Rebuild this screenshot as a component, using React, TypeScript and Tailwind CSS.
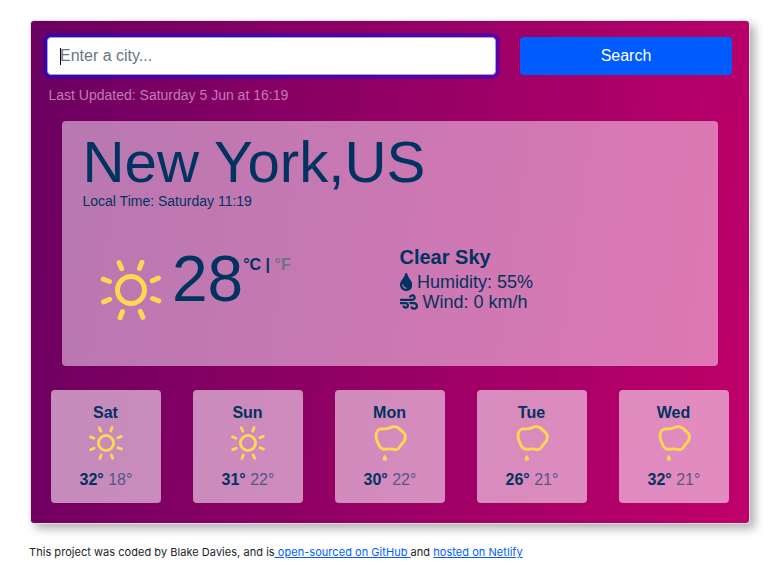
import React from "react";

const rays = [-23.5, 21.5, 66.5, 111.5, 156.5, 201.5, 246.5, 291.5];

function Sun({ className }: { className: string }) {
  return (
    <svg viewBox="-34 -34 68 68" className={className} fill="none" stroke="#ffd750" strokeWidth="5" strokeLinecap="round">
      <circle r="13.5" />
      {rays.map((a) => (
        <line key={a} x1="0" y1="-23.2" x2="0" y2="-29.8" transform={`rotate(${a})`} />
      ))}
    </svg>
  );
}

function RainCloud({ className }: { className: string }) {
  return (
    <svg viewBox="0 0 114 114" className={className} fill="none">
      <path
        d="M51 27C39 25 33 37 33 48C33 60 38 67 43 78C48 90 60 88 71 87C79 84 83 91 94 89C104 87 104 78 111 71C118 66 121 58 121 49C121 40 115 37 109 32C101 20 86 17 75 23C66 28 61 26 51 27Z"
        transform="translate(-18 -12)"
        stroke="#ffd750"
        strokeWidth="8.5"
        strokeLinejoin="round"
      />
      <path d="M41 91C39 98 35 100 35 105C35 112 48 112 48 105C48 100 43 98 41 91Z" fill="#ffd750" />
    </svg>
  );
}

const days = [
  { day: "Sat", max: 32, min: 18, rain: false },
  { day: "Sun", max: 31, min: 22, rain: false },
  { day: "Mon", max: 30, min: 22, rain: true },
  { day: "Tue", max: 26, min: 21, rain: true },
  { day: "Wed", max: 32, min: 21, rain: true },
];

export default function App() {
  return (
    <div className="h-[583px] w-[782px] overflow-hidden bg-white pl-[30px] pt-5 font-['Liberation_Sans',Arial,sans-serif] text-[#003360]">
      <main className="h-[504px] w-[720px] rounded border border-black/12 bg-[linear-gradient(98deg,#6a0060_0%,#c0006a_100%)] bg-clip-padding px-4 pt-4 shadow-[5px_5px_10px_rgba(0,0,0,0.3)]">
        <form className="flex h-[38px] gap-6">
          <div className="flex w-[449px] items-center rounded border border-[#80adff] bg-white pl-3 text-base text-[#6c757d] shadow-[0_0_0_4px_rgba(40,0,210,0.5)]">
            <span className="h-[17px] w-px bg-black" />
            <span className="-ml-px">Enter a city...</span>
          </div>
          <button type="button" className="w-[212px] rounded bg-[#005cff] text-center text-base text-white">
            Search
          </button>
        </form>
        <p className="mt-2.5 pl-[1.5px] text-sm leading-5 text-[#c47ab4]">Last Updated: Saturday 5 Jun at 16:19</p>

        <section className="ml-[15px] mt-4 h-[245px] w-[656px] rounded bg-[rgba(255,236,253,0.51)] pl-[20.5px] pt-[9px]">
          <h1 className="h-[63px] whitespace-nowrap text-[58.2px] leading-[64px]">New York,US</h1>
          <p className="text-sm leading-4">Local Time: Saturday 11:19</p>
          <div className="flex">
            <div className="flex w-[317px] pt-[38px]">
              <Sun className="ml-[14.5px] mt-[9px] h-[68px] w-[68px]" />
              <span className="ml-[7px] h-[64px] text-[64px] leading-[64px]">28</span>
              <span className="mt-[6px] text-base font-bold">
                °C | <span className="text-[#6c757d]">°F</span>
              </span>
            </div>
            <div className="pt-[36px] text-[18px] leading-5">
              <h2 className="text-xl leading-6 font-bold">Clear Sky</h2>
              <div className="mt-[3px] flex items-center">
                <svg viewBox="0 0 352 512" className="h-[18px] w-[12.4px]" fill="currentColor">
                  <path d="M205.22 22.09c-7.94-28.78-49.44-30.12-58.44 0C100.01 179.85 0 222.72 0 333.91 0 432.35 78.72 512 176 512s176-79.65 176-178.09c0-111.75-99.79-153.34-146.78-311.82zM176 448c-61.75 0-112-50.25-112-112 0-8.84 7.16-16 16-16s16 7.16 16 16c0 44.11 35.89 80 80 80 8.84 0 16 7.16 16 16s-7.16 16-16 16z" />
                </svg>
                <span className="ml-[5px]">Humidity: 55%</span>
              </div>
              <div className="flex items-center">
                <svg viewBox="0 0 512 512" className="h-[18px] w-[18px]" fill="currentColor">
                  <path d="M156.7 256H16c-8.800 0-16 7.200-16 16v32c0 8.800 7.200 16 16 16h142.200c15.900 0 30.800 10.900 33.400 26.600 3.300 20-12.100 37.400-31.600 37.400-14.100 0-26.100-9.200-30.400-21.900-2.100-6.300-8.600-10.100-15.200-10.100H81.600c-9.800 0-17.700 8.800-15.900 18.400 8.600 44.100 47.600 77.600 94.200 77.600 57.100 0 102.700-50.100 95.200-108.600C249 291 205.400 256 156.700 256zM16 224h336c59.700 0 106.800-54.800 93.800-116.700-7.600-36.200-36.900-65.500-73.100-73.100-55.400-11.600-105.100 24.900-114.900 75.500-1.900 9.600 6.100 18.300 15.800 18.300h32.800c6.700 0 13.100-3.800 15.200-10.100C325.900 105.200 337.900 96 352 96c19.400 0 34.900 17.400 31.600 37.400-2.600 15.700-17.400 26.600-33.400 26.600H16c-8.800 0-16 7.200-16 16v32c0 8.800 7.200 16 16 16zm384 32H243.700c19.300 16.600 33.200 38.800 39.800 64H400c26.500 0 48 21.500 48 48s-21.500 48-48 48c-17.900 0-33.300-9.900-41.600-24.400-2.900-5-8.700-7.600-14.500-7.600h-33.800c-10.900 0-19 10.800-15.300 21.100 17.800 50.600 70.500 84.800 129.400 72.300 41.200-8.700 75.100-41.600 84.700-82.700C526 321.500 470.500 256 400 256z" />
                </svg>
                <span className="ml-[5px]">Wind: 0 km/h</span>
              </div>
            </div>
          </div>
        </section>

        <section className="ml-1 mt-6 flex gap-8">
          {days.map((d) => (
            <article key={d.day} className="flex h-[113px] w-[110px] shrink-0 flex-col items-center rounded bg-[rgba(255,240,253,0.58)] pt-[11px]">
              <h3 className="pr-px text-base leading-[23px] font-bold">{d.day}</h3>
              {d.rain ? <RainCloud className="h-[38px] w-[38px]" /> : <Sun className="h-[38px] w-[38px]" />}
              <p className="mt-[6px] text-base leading-6">
                <b>{d.max}°</b> <span className="opacity-60">{d.min}°</span>
              </p>
            </article>
          ))}
        </section>
      </main>
      <footer className="-ml-px mt-5 whitespace-nowrap font-[Inter,sans-serif] text-[11px] leading-4 tracking-[0.04px] text-[#212529]">
        This project was coded by Blake Davies, and is
        <a className="text-[#005cff] underline"> open-sourced on GitHub </a>
        and <a className="text-[#005cff] underline">hosted on Netlify</a>
      </footer>
    </div>
  );
}
